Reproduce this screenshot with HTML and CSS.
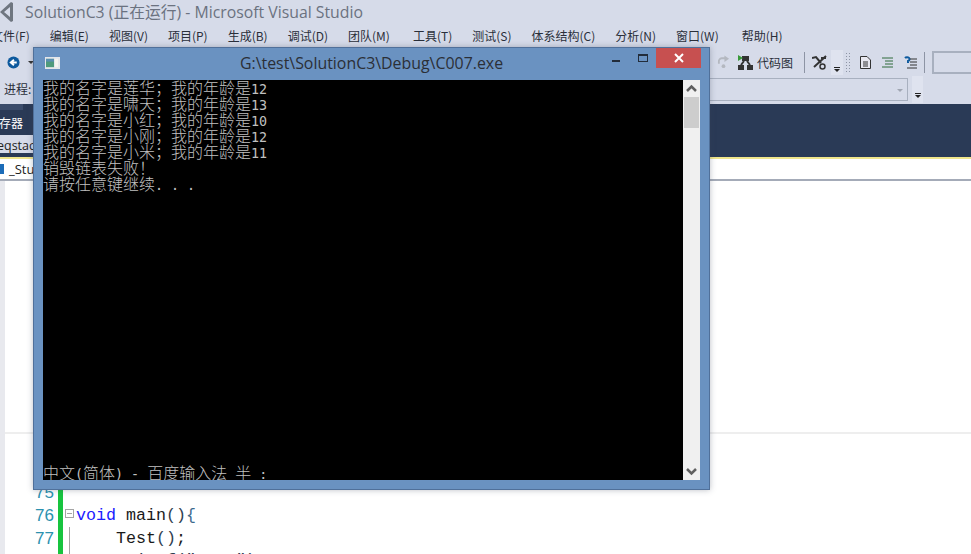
FILE: index.html
```html
<!DOCTYPE html>
<html lang="zh">
<head>
<meta charset="utf-8">
<title>SolutionC3</title>
<link rel="stylesheet" href="styles.css">
</head>
<body>
<div class="ide">
  <div class="titlebar">
    <svg class="vs-logo" width="14" height="22" viewBox="0 0 14 22"><path d="M12 1 L1 11 L12 21 L14 20 L14 2 Z M11 6 V16 L5 11 Z" fill="#6f7680" fill-rule="evenodd"/></svg>
    <span class="title-text">SolutionC3 (正在运行) - Microsoft Visual Studio</span>
  </div>
  <div class="menubar">
    <span class="menu first">文件(F)</span>
    <span class="menu">编辑(E)</span>
    <span class="menu">视图(V)</span>
    <span class="menu">项目(P)</span>
    <span class="menu">生成(B)</span>
    <span class="menu">调试(D)</span>
    <span class="menu">团队(M)</span>
    <span class="menu wide">工具(T)</span>
    <span class="menu">测试(S)</span>
    <span class="menu">体系结构(C)</span>
    <span class="menu">分析(N)</span>
    <span class="menu">窗口(W)</span>
    <span class="menu wide">帮助(H)</span>
  </div>
  <div class="toolbar">
    <svg class="back" width="13" height="13" viewBox="0 0 14 14"><circle cx="7" cy="7" r="6.5" fill="#0e5a9e"/><path d="M10.5 7 H5 M7.5 4 L4 7 L7.5 10" fill="none" stroke="#fff" stroke-width="2"/></svg>
    <span class="mini-arrow"></span>
    <span class="toolbar-fill"></span>
    <svg class="redo" width="13" height="14" viewBox="0 0 14 14"><path d="M9 3 H5 A3.5 3.5 0 0 0 2 7 V9" fill="none" stroke="#b4b8c0" stroke-width="2"/><path d="M8 0 L13 3.5 L8 7 Z" fill="#b4b8c0"/><circle cx="7" cy="11.5" r="2" fill="#b4b8c0"/></svg>
    <svg class="codemap" width="15" height="15" viewBox="0 0 15 15"><rect x="4" y="1" width="7" height="5" fill="#333"/><rect x="0" y="10" width="6" height="5" fill="#333"/><rect x="9" y="10" width="6" height="5" fill="#333"/><path d="M6 6 L3 10 M9 6 L12 10" stroke="#333" stroke-width="2"/><path d="M0 0 L5 3 L0 6 Z" fill="#3a9a3a"/></svg>
    <span class="tool-label">代码图</span>
    <span class="sep sep-a"></span>
    <svg class="tool-x" width="15" height="15" viewBox="0 0 15 15"><path d="M0 3 L4 2 L9 8 M14 1 L2 12 M9 3 H14" fill="none" stroke="#333" stroke-width="2"/><circle cx="10.500" cy="11.500" r="2.500" fill="none" stroke="#333" stroke-width="1.500"/></svg>
    <span class="drop-btn"><i class="bar"></i><i class="tri"></i></span>
    <span class="grip"></span>
    <svg class="tool-doc" width="11" height="13" viewBox="0 0 11 13"><path d="M.5.5 H7 L10.500 4 V12.500 H.5 Z" fill="#e8e8f0" stroke="#333"/><path d="M3 6 H8 M3 8 H8 M3 10 H8" stroke="#333"/></svg>
    <svg class="tool-lines" width="11" height="11" viewBox="0 0 11 11"><path d="M0 1 H11 M3 4 H11 M3 7 H11 M0 10 H11" stroke="#2f6b3a"/></svg>
    <svg class="tool-help" width="13" height="13" viewBox="0 0 13 13"><path d="M1 2 A2.500 2 0 1 1 4 5 V7" fill="none" stroke="#0e5a9e" stroke-width="2"/><path d="M6 3 H13 M6 6 H13 M6 9 H13 M3 12 H13" stroke="#333"/></svg>
    <span class="sep sep-b"></span>
    <span class="find-box"></span>
  </div>
  <div class="toolbar2">
    <span class="process">进程:</span>
    <span class="combo"><i class="combo-tri"></i></span>
    <span class="drop-btn tall"><i class="bar"></i><i class="tri"></i></span>
  </div>
  <div class="docband">
    <div class="band-strip"></div>
    <div class="band-title">存器</div>
    <div class="doc-tab">eqstac</div>
  </div>
  <div class="navbar">
    <i class="nav-icon"></i><span class="nav-text">_Stu</span>
  </div>
  <div class="editor">
    <div class="gutter-strip"></div>
    <div class="code-area">
      <div class="rule"></div>
      <div class="code-line">
        <span class="ln">75</span><i class="green"></i><i class="fold-space"></i><span class="code"></span>
      </div>
      <div class="code-line">
        <span class="ln">76</span><i class="green"></i><i class="fold-space"><b class="fold-box"></b></i><span class="code"><span class="kw">void</span> main<span class="paren">()</span><span class="brace">{</span></span>
      </div>
      <div class="code-line">
        <span class="ln">77</span><i class="green"></i><i class="fold-space"><b class="fold-line"></b></i><span class="code">    Test<span class="paren">()</span>;</span>
      </div>
      <div class="code-line last">
        <span class="ln"></span><i class="green"></i><i class="fold-space"><b class="fold-line"></b></i><span class="code">    <span class="paren">printf("    ")</span></span>
      </div>
    </div>
  </div>
</div>

<div class="console">
  <div class="con-title">
    <svg class="con-icon" width="15" height="12" viewBox="0 0 15 13" preserveAspectRatio="none"><rect width="15" height="13" fill="#e4e6ea"/><rect x="1" y="2" width="8" height="9" fill="#4f9a7c"/><rect x="1" y="2" width="8" height="3" fill="#5a8fb0"/><rect x="10" y="2" width="3" height="9" fill="#f4f4f0"/></svg>
    <span class="con-name">G:\test\SolutionC3\Debug\C007.exe</span>
    <span class="con-btn"><i class="con-min"></i></span>
    <span class="con-btn"><i class="con-max"></i></span>
    <span class="con-close"><svg width="10" height="10" viewBox="0 0 10 10"><path d="M1 1 L9 9 M9 1 L1 9" stroke="#fff" stroke-width="2"/></svg></span>
  </div>
  <div class="con-body">
    <div class="screen">
      <div class="output">
        <div class="line">我的名字是莲华；我的年龄是<span class="ascii">12</span></div>
        <div class="line">我的名字是啸天；我的年龄是<span class="ascii">13</span></div>
        <div class="line">我的名字是小红；我的年龄是<span class="ascii">10</span></div>
        <div class="line">我的名字是小刚；我的年龄是<span class="ascii">12</span></div>
        <div class="line">我的名字是小米；我的年龄是<span class="ascii">11</span></div>
        <div class="line">销毁链表失败！</div>
        <div class="line">请按任意键继续<span class="ascii">. . .</span></div>
      </div>
      <div class="line ime">中文<span class="ascii">(</span>简体<span class="ascii">) - </span>百度输入法<span class="ascii"> </span>半<span class="ascii"> :</span></div>
    </div>
    <div class="scroll">
      <svg width="17" height="17" viewBox="0 0 17 17"><path d="M4 11 L8.500 6.500 L13 11" fill="none" stroke="#606060" stroke-width="2.500"/></svg>
      <div class="thumb"></div>
      <div class="track"></div>
      <svg width="17" height="17" viewBox="0 0 17 17"><path d="M4 6 L8.500 10.500 L13 6" fill="none" stroke="#606060" stroke-width="2.500"/></svg>
    </div>
  </div>
</div>
</body>
</html>
```

FILE: styles.css
```css
html, body { margin: 0; padding: 0; }
body { width: 971px; height: 554px; overflow: hidden; position: relative; background: #fff; font-family: "Noto Sans CJK SC", "Noto Sans", sans-serif; }
i, b { display: block; font-style: normal; }

.ide { display: flex; flex-direction: column; height: 554px; overflow: hidden; }

.titlebar { height: 25px; padding-bottom: 2px; box-sizing: border-box; background: #d6dbe9; display: flex; align-items: center; flex: none; }
.vs-logo { margin-left: -1px; margin-right: 12px; flex: none; }
.title-text { font-family: "Open Sans", "Noto Sans CJK SC", sans-serif; font-size: 15.8px; color: #6b7280; white-space: nowrap; }

.menubar { height: 23px; padding-bottom: 2px; box-sizing: border-box; background: #d6dbe9; display: flex; align-items: center; gap: 20px; flex: none; font-size: 12px; color: #2a2f3a; white-space: nowrap; }
.menu.first { margin-left: -9px; }
.menu.wide { margin-left: 3px; }

.toolbar { height: 28px; background: #d6dbe9; display: flex; align-items: center; flex: none; position: relative; }
.back { margin-left: 7px; flex: none; }
.mini-arrow { width: 0; height: 0; border: 3px solid transparent; border-top-color: #333; margin: 3px 0 0 8px; }
.toolbar-fill { flex: 1; }
.redo { flex: none; margin-right: 8px; }
.codemap { flex: none; margin-right: 4px; }
.tool-label { font-size: 12px; color: #2a2f3a; width: 36px; white-space: nowrap; flex: none; }
.sep { width: 1px; height: 21px; background: #8d94a4; flex: none; }
.sep-a { margin: 0 7px 0 11px; }
.tool-x { flex: none; margin-right: 4px; }
.drop-btn { width: 12px; height: 25px; background: #dfe3ef; display: flex; flex-direction: column; align-items: center; justify-content: flex-end; padding-bottom: 3px; box-sizing: border-box; flex: none; }
.drop-btn .bar { width: 6px; height: 1px; background: #222; margin-bottom: 1px; }
.drop-btn .tri { width: 0; height: 0; border: 3px solid transparent; border-top-color: #222; border-bottom-width: 0; }
.grip { width: 6px; height: 21px; margin-left: 2px; flex: none; background-image: radial-gradient(#8d94a4 .7px, transparent .8px); background-size: 3px 3px; }
.tool-doc { flex: none; margin-left: 9px; }
.tool-lines { flex: none; margin-left: 11px; }
.tool-help { flex: none; margin-left: 11px; }
.sep-b { margin: 0 7px 0 7px; }
.find-box { width: 39px; height: 23px; border: 2px solid #a8b0bf; border-right: 0; box-sizing: border-box; background: #d6dbe9; flex: none; }

.toolbar2 { height: 28px; background: #d6dbe9; display: flex; align-items: flex-start; flex: none; }
.process { font-size: 12px; color: #2a2f3a; margin-left: 4px; width: 42px; flex: none; line-height: 26px; }
.combo { flex: none; width: 862px; height: 23px; margin-top: 2px; border: 1px solid #a8b0bf; box-sizing: border-box; position: relative; }
.combo-tri { position: absolute; right: 1px; top: 10px; width: 0; height: 0; border: 3px solid transparent; border-top-color: #a0a6b2; border-bottom-width: 0; margin-right: 3px; }
.drop-btn.tall { width: 11px; height: 27px; margin-left: 4px; padding-bottom: 5px; }

.docband { height: 53px; background: #2a3a56; flex: none; position: relative; }
.band-strip { width: 23px; height: 6px; background: #3b4c6b; }
.band-title { color: #fff; font-size: 12px; margin-left: -1px; line-height: 17px; margin-top: 4px; }
.doc-tab { background: #d6dbe9; color: #222; font-family: "Open Sans", sans-serif; font-size: 12.5px; height: 18px; line-height: 22px; width: 33px; margin-top: 4px; text-indent: -3px; overflow: hidden; white-space: nowrap; }

.navbar { height: 24px; background: #fff; border-top: 2px solid #f0e68c; border-bottom: 2px solid #a4abb8; box-sizing: border-box; display: flex; align-items: center; flex: none; }
.nav-icon { width: 4px; height: 10px; background: #1c6cb8; flex: none; margin-right: 5px; }
.nav-text { font-family: "Open Sans", sans-serif; font-size: 13px; color: #222; }

.editor { flex: 1; display: flex; background: #fff; min-height: 0; overflow: hidden; }
.gutter-strip { width: 5px; background: #e8e9ee; flex: none; }
.code-area { flex: 1; position: relative; padding-top: 300px; }
.rule { position: absolute; left: 0; right: 0; top: 251px; height: 2px; background: #eeeeee; }
.code-line { display: flex; height: 23px; align-items: center; }
.code-line.last { margin-top: -1px; }
.ln { width: 49px; margin-right: 4px; text-align: right; flex: none; font-family: "Liberation Sans", sans-serif; font-size: 17px; color: #2b91af; }
.green { width: 5px; height: 23px; background: #17c43f; flex: none; }
.fold-space { width: 13px; height: 23px; position: relative; flex: none; }
.fold-box { position: absolute; left: 2px; top: 5px; width: 9px; height: 9px; border: 1px solid #a5a5a5; box-sizing: border-box; background: linear-gradient(#a5a5a5, #a5a5a5) center / 5px 1px no-repeat; }
.fold-line { position: absolute; left: 6px; top: 0; width: 1px; height: 24px; background: #a5a5a5; }
.code { font-family: "Liberation Mono", monospace; font-size: 16.67px; color: #1a1a1a; white-space: pre; }
.kw { color: #2020ff; }
.paren { color: #2f3e50; }
.brace { color: #3d6a8c; }

.console { position: absolute; left: 33px; top: 47px; width: 677px; height: 443px; background: #6a92c1; border: 1px solid #50709a; box-sizing: border-box; box-shadow: 0 0 6px rgba(60, 70, 90, .35); display: flex; flex-direction: column; }
.con-title { height: 32px; display: flex; align-items: flex-start; flex: none; }
.con-icon { margin: 9px 0 0 11px; flex: none; }
.con-name { flex: 1; min-width: 0; text-align: center; font-family: "Open Sans", sans-serif; font-size: 15.9px; color: #2b2f36; line-height: 31px; padding-left: 81px; white-space: nowrap; }
.con-btn { width: 27px; height: 20px; display: flex; align-items: center; justify-content: center; flex: none; }
.con-min { width: 8px; height: 2px; background: #222c3a; margin-top: 6px; }
.con-max { width: 10px; height: 8px; box-sizing: border-box; border: solid #222c3a; border-width: 2px 1px 1px; }
.con-close { width: 45px; height: 20px; background: #c75050; display: flex; align-items: center; justify-content: center; margin: 0 8px 0 0; flex: none; }
.con-body { margin: 0 9px; height: 400px; display: flex; flex: none; }
.screen { width: 640px; background: #000; position: relative; overflow: hidden; }
.output { margin-top: -1px; }
.line { height: 16px; line-height: 16px; font-family: "Noto Sans CJK SC", sans-serif; font-weight: 300; font-size: 16px; color: #c0c0c0; white-space: pre; }
.ime { position: absolute; left: 0; bottom: 0; }
.ascii { font-family: "DejaVu Sans Mono", monospace; font-size: 13.33px; font-weight: 400; line-height: 1; }
.scroll { width: 17px; background: #f0f0f0; display: flex; flex-direction: column; flex: none; }
.scroll svg { flex: none; }
.thumb { height: 31px; width: 15px; margin-left: 1px; background: #cdcdcd; flex: none; }
.track { flex: 1; }
```
